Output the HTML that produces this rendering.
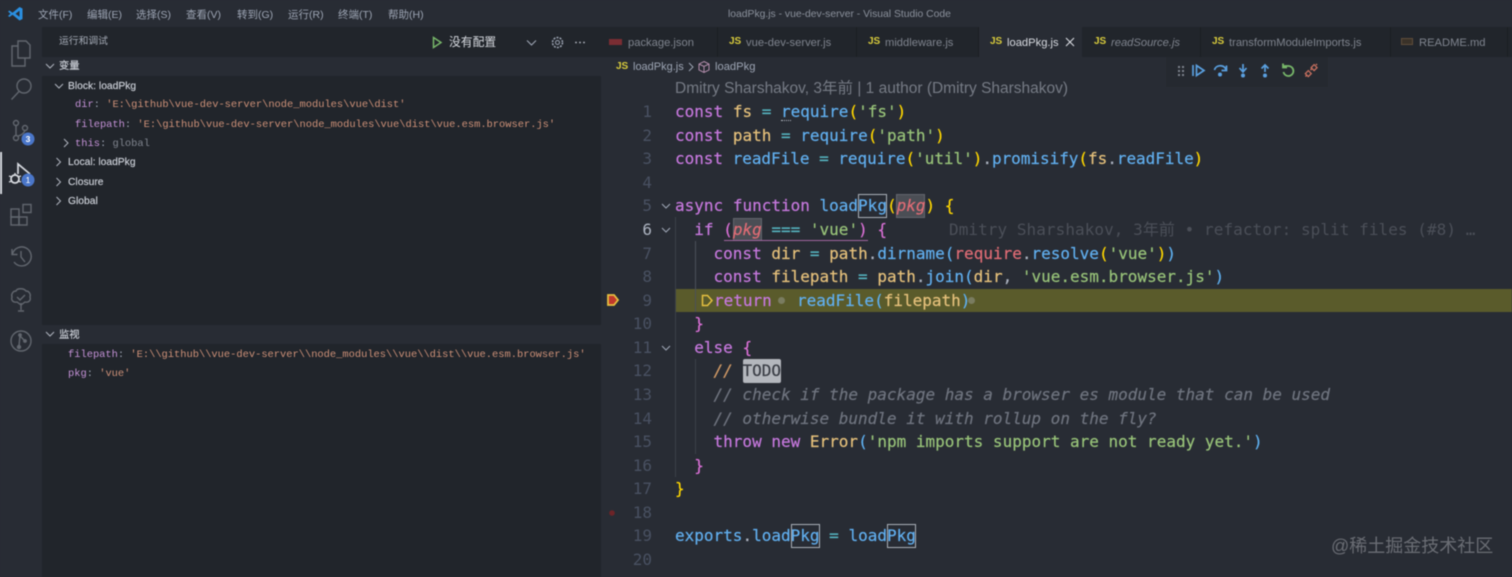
<!DOCTYPE html>
<html><head><meta charset="utf-8"><style>
html,body{margin:0;padding:0;background:#282c34}
#r{position:relative;width:1512px;height:577px;overflow:hidden;background:#282c34;font-family:"Liberation Sans","Noto Sans CJK SC",sans-serif;color:#abb2bf;filter:blur(.45px)}
.a{position:absolute;white-space:pre}
.m{position:absolute;top:6.500px;font-size:10.500px;line-height:16px;color:#9da5b4;white-space:pre}
.tab{position:absolute;top:27px;height:30px;background:#21252b;border-right:1px solid #1b1e23}
.tab b{position:absolute;left:11px;top:8px;font:bold 10px/14px "Liberation Sans",sans-serif;color:#d9cc3c}
.tab span{position:absolute;top:8px;left:28px;font-size:11.200px;line-height:16px;color:#7f848e;white-space:pre}
.c{position:absolute;left:0;height:24px;line-height:24px;font-family:"DejaVu Sans Mono",monospace;font-size:16px;white-space:pre;color:#abb2bf;-webkit-text-stroke:.2px}
.n{position:absolute;left:612px;width:40px;text-align:right;height:24px;line-height:24px;font-family:"DejaVu Sans Mono",monospace;font-size:16px;color:#495162}
.v{position:absolute;font-family:"Liberation Mono",monospace;font-size:10.400px;line-height:14px;white-space:pre;color:#ce9178}
.s{position:absolute;font-size:10.300px;line-height:14px;color:#cdd1d9;white-space:pre;-webkit-text-stroke:.15px}
.k{color:#c678dd}.b{color:#61afef}.g{color:#98c379}.y{color:#e5c07b}.t{color:#56b6c2}.r{color:#e06c75}.G{color:#ffd700}.P{color:#da70d6}.B{color:#5fb0f0}.p{color:#c391d6}.o{color:#d19a66}
.i{font-style:italic;color:#6f747f}
.hl{position:absolute;box-sizing:border-box;height:24px;border:1px solid #aab0b8}
</style></head><body><div id="r">

<!-- activity bar / sidebar -->
<div class="a" style="left:42px;top:27px;width:559px;height:550px;background:#21252b"></div>
<div class="a" style="left:42px;top:57px;width:559px;height:19px;background:#282c34"></div>
<div class="a" style="left:42px;top:325px;width:559px;height:19px;background:#282c34"></div>
<div class="a" style="left:0;top:152px;width:2px;height:42px;background:#d7dae0"></div>

<svg class="a" style="left:0;top:0" width="42" height="360" fill="none" stroke="#62676f" stroke-width="1.400">
<path fill-rule="evenodd" d="M19.500 7L12.500 12.800 9.500 10.500 8 11.500 10.500 13.700 8 16 9.500 17 12.500 14.700 19.500 20.500 22.500 19V8.500zM19.500 10.800L15.500 13.700 19.500 16.700z" fill="#2a8fe0" stroke="none"/>
<path d="M18 41h8l4 4v13h-12zM18 46h-6v20h13v-8"/>
<circle cx="24" cy="86" r="7"/><path d="M19 91.500l-7.500 8"/>
<circle cx="16" cy="123" r="2.500"/><circle cx="16" cy="138" r="2.500"/><circle cx="25" cy="128" r="2.500"/><path d="M16 125.500v10M18 136c4-1 6-3 7-5.500"/>
<path d="M18 174v-10l12 10" stroke="#d7dae0" stroke-width="1.700"/>
<circle cx="15" cy="179" r="4" stroke="#d7dae0" stroke-width="1.800"/><path d="M9 176l3 1M9 182l3-1M21 176l-3 1M21 182l-3-1M15 173v2" stroke="#d7dae0"/>
<rect x="11" y="209" width="8" height="8"/><rect x="11" y="217" width="8" height="8"/><rect x="19" y="217" width="8" height="8"/><rect x="23" y="204.500" width="8" height="8"/>
<path d="M12.500 254a9.500 9.500 0 1 1 1.500 8M12 249v5.500h5.500M21 251v6l4 5"/>
<path d="M21 310v-7M21 305l-4-3c-4 1-6-2-5-5-1-3 1-6 4-6 1-3 8-3 10 0 3 0 5 3 4 6 1 3-1 6-5 5zM17 297l3 3 5-5M18 311h6"/>
<circle cx="21" cy="341" r="10"/><path d="M20 335l-1 11M20 336l5 5"/><circle cx="19" cy="347" r="1.500" fill="#62676f"/><circle cx="20" cy="335" r="1.200" fill="#62676f"/><circle cx="25" cy="341" r="1.200" fill="#62676f"/>
<circle cx="28" cy="139" r="6.500" fill="#4a76c9" stroke="none"/>
<circle cx="28" cy="180" r="6.500" fill="#4a76c9" stroke="none"/>
<text x="28" y="142" font-family="Liberation Sans" font-size="8.500" font-weight="bold" fill="#fff" stroke="none" text-anchor="middle">3</text>
<text x="28" y="183" font-family="Liberation Sans" font-size="8.500" fill="#fff" stroke="none" text-anchor="middle">1</text>
</svg>

<!-- menu -->
<div class="m" style="left:38px">文件(F)</div>
<div class="m" style="left:87px">编辑(E)</div>
<div class="m" style="left:136px">选择(S)</div>
<div class="m" style="left:186px">查看(V)</div>
<div class="m" style="left:237px">转到(G)</div>
<div class="m" style="left:288px">运行(R)</div>
<div class="m" style="left:338px">终端(T)</div>
<div class="m" style="left:388px">帮助(H)</div>
<div class="m" style="left:728px;font-size:10.350px;color:#8b919c">loadPkg.js - vue-dev-server - Visual Studio Code</div>

<!-- sidebar content -->
<div class="a" style="left:59px;top:35px;font-size:9.800px;line-height:14px;color:#a2a8b3">运行和调试</div>
<svg class="a" style="left:430px;top:35px" width="170" height="15" fill="none">
<path d="M3.500 2.500l7.500 5-7.500 5z" stroke="#78b86a" stroke-width="1.500"/>
<path d="M97 5.500l4.500 4.500 4.500-4.500" stroke="#9da5b4" stroke-width="1.100"/>
<circle cx="127.500" cy="7.500" r="2" stroke="#9da5b4"/><circle cx="127.500" cy="7.500" r="5" stroke="#9da5b4" stroke-width="1.500" stroke-dasharray="2 1.200"/>
<circle cx="146" cy="7.500" r=".9" fill="#b5bac4"/><circle cx="150" cy="7.500" r=".9" fill="#b5bac4"/><circle cx="154" cy="7.500" r=".9" fill="#b5bac4"/>
</svg>
<div class="a" style="left:449px;top:34px;font-size:11.800px;line-height:16px;color:#d7dae0">没有配置</div>

<svg class="a" style="left:42px;top:57px" width="30" height="300" fill="none" stroke="#b0b5bf" stroke-width="1">
<path d="M4 7l4 4 4-4"/><path d="M13 27l4 4 4-4"/><path d="M22 82l4 4-4 4"/><path d="M14.500 101l4 4-4 4"/><path d="M14.500 121l4 4-4 4"/><path d="M14.500 140l4 4-4 4"/><path d="M4 275l4 4 4-4"/>
</svg>
<div class="s" style="left:59px;top:60px">变量</div>
<div class="s" style="left:68px;top:80px">Block: loadPkg</div>
<div class="v" style="left:75px;top:98px"><span class="p">dir</span><span style="color:#9da5b4">: </span>'E:\github\vue-dev-server\node_modules\vue\dist'</div>
<div class="v" style="left:75px;top:118px"><span class="p">filepath</span><span style="color:#9da5b4">: </span>'E:\github\vue-dev-server\node_modules\vue\dist\vue.esm.browser.js'</div>
<div class="v" style="left:75px;top:137px"><span class="p">this</span><span style="color:#9da5b4">: </span><span style="color:#7f848e">global</span></div>
<div class="s" style="left:68px;top:156px">Local: loadPkg</div>
<div class="s" style="left:68px;top:176px">Closure</div>
<div class="s" style="left:68px;top:195px">Global</div>
<div class="s" style="left:59px;top:329px">监视</div>
<div class="v" style="left:68px;top:348px"><span class="p">filepath</span><span style="color:#9da5b4">: </span>'E:\\github\\vue-dev-server\\node_modules\\vue\\dist\\vue.esm.browser.js'</div>
<div class="v" style="left:68px;top:367px"><span class="p">pkg</span><span style="color:#9da5b4">: </span>'vue'</div>

<!-- tabs -->
<div class="a" style="left:601px;top:27px;width:911px;height:30px;background:#21252b"></div>
<div class="tab" style="left:601px;width:116px"><i class="a" style="left:8px;top:12px;width:13px;height:6px;background:#7a2d33"></i><span style="left:27px">package.json</span></div>
<div class="tab" style="left:718px;width:138px"><b>JS</b><span>vue-dev-server.js</span></div>
<div class="tab" style="left:857px;width:121px"><b>JS</b><span>middleware.js</span></div>
<div class="tab" style="left:979px;width:103px;background:#282c34;border:0"><b>JS</b><span style="color:#d7dae0">loadPkg.js</span><svg class="a" style="left:85px;top:9px" width="12" height="12" stroke="#d7dae0" stroke-width="1.100"><path d="M2 2l8 8M10 2l-8 8"/></svg></div>
<div class="tab" style="left:1083px;width:117px"><b>JS</b><span style="font-style:italic">readSource.js</span></div>
<div class="tab" style="left:1201px;width:189px"><b>JS</b><span>transformModuleImports.js</span></div>
<div class="tab" style="left:1391px;width:116px"><i class="a" style="left:10px;top:11px;width:12px;height:7px;border:1px solid #5e4d3a;box-sizing:border-box;background:#3a3229"></i><span>README.md</span></div>

<!-- breadcrumbs -->
<div class="a" style="left:616px;top:60px;font:bold 10px/14px 'Liberation Sans',sans-serif;color:#d9cc3c">JS</div>
<div class="a" style="left:633px;top:59px;font-size:11px;line-height:16px;color:#9da5b4">loadPkg.js</div>
<svg class="a" style="left:687px;top:60px" width="26" height="14" fill="none"><path d="M2 3l4 4-4 4" stroke="#9da5b4"/><path d="M17 1.500l5 2.500v6l-5 2.500-5-2.500v-6zM12 4l5 2.500 5-2.500M17 6.500v6" stroke="#b48ead"/></svg>
<div class="a" style="left:715px;top:59px;font-size:11.200px;line-height:16px;color:#9da5b4">loadPkg</div>

<!-- codelens -->
<div class="a" style="left:675px;top:80px;font-size:15.500px;line-height:18px;color:#767b85">Dmitry Sharshakov, 3年前 | 1 author (Dmitry Sharshakov)</div>

<!-- debug toolbar -->
<div class="a" style="left:1166px;top:57px;width:162px;height:30px;background:#252930"></div>
<svg class="a" style="left:1166px;top:57px" width="162" height="30" fill="none" stroke-width="1.700">
<g fill="#7f848e"><rect x="12" y="9" width="2" height="2"/><rect x="16" y="9" width="2" height="2"/><rect x="12" y="13" width="2" height="2"/><rect x="16" y="13" width="2" height="2"/><rect x="12" y="17" width="2" height="2"/><rect x="16" y="17" width="2" height="2"/></g>
<path d="M27 8v11" stroke="#5aa0e0"/><path d="M30.500 8.500l7.500 5-7.500 5z" stroke="#5aa0e0"/>
<path d="M48.500 13c1-5 9-6 11.500-.5M60.500 8.500v5h-5" stroke="#5aa0e0"/><circle cx="54" cy="17.500" r="2" fill="#5aa0e0" stroke="none"/>
<path d="M77 7v8M73.500 11l3.500 4 3.500-4" stroke="#5aa0e0"/><circle cx="77" cy="18.500" r="2" fill="#5aa0e0" stroke="none"/>
<path d="M99 15V8M95.500 11.500L99 8l3.500 3.500" stroke="#5aa0e0"/><circle cx="99" cy="18.500" r="2" fill="#5aa0e0" stroke="none"/>
<path d="M117 9h5.500a5 5 0 1 1-5 6M117 6.500v4h4" stroke="#78b86a" stroke-width="1.800"/>
<path d="M139.500 19.500l1-1M144.500 13l1.500-1.500M150 8l1-1" stroke="#c8705f" stroke-width="1.500"/><rect x="140.200" y="14.500" width="4.200" height="4.200" transform="rotate(45 142.300 16.600)" stroke="#c8705f" stroke-width="1.300"/><rect x="146" y="8.500" width="4.200" height="4.200" transform="rotate(45 148.100 10.600)" stroke="#c8705f" stroke-width="1.300"/>
</svg>

<!-- indent guides and line 9 -->
<div class="a" style="left:675px;top:289px;width:837px;height:23px;background:#5a5b2b"></div>
<div class="a" style="left:675px;top:217px;width:1px;height:260px;background:#3b4048"></div>
<div class="a" style="left:695px;top:241px;width:1px;height:71px;background:#4b5059"></div>
<div class="a" style="left:695px;top:359px;width:1px;height:95px;background:#3b4048"></div>

<!-- highlights -->
<div class="hl" style="left:858px;top:194px;width:29px"></div>
<div class="hl" style="left:896px;top:194px;width:29px;background:#4b4e55;border-color:#62656c"></div>
<div class="hl" style="left:733px;top:218px;width:29px;height:23px;background:#4b4e55;border-color:#62656c"></div>
<div class="a" style="left:724px;top:240px;width:144px;height:1px;background:#a0659f"></div>
<div class="a" style="left:743px;top:359px;width:38px;height:24px;background:#b4b7bd;border-radius:2px"></div>
<div class="hl" style="left:791px;top:524px;width:29px"></div>
<div class="hl" style="left:887px;top:524px;width:29px"></div>

<!-- line numbers -->
<div class="n" style="top:100px">1</div><div class="n" style="top:123.600px">2</div><div class="n" style="top:147.200px">3</div><div class="n" style="top:170.700px">4</div><div class="n" style="top:194.300px">5</div><div class="n" style="top:217.900px;color:#abb2bf">6</div><div class="n" style="top:241.500px">7</div><div class="n" style="top:265.100px">8</div><div class="n" style="top:288.600px">9</div><div class="n" style="top:312.200px">10</div><div class="n" style="top:335.800px">11</div><div class="n" style="top:359.400px">12</div><div class="n" style="top:383px">13</div><div class="n" style="top:406.500px">14</div><div class="n" style="top:430.100px">15</div><div class="n" style="top:453.700px">16</div><div class="n" style="top:477.300px">17</div><div class="n" style="top:500.900px">18</div><div class="n" style="top:524.400px">19</div><div class="n" style="top:548px">20</div>

<svg class="a" style="left:600px;top:190px" width="80" height="335" fill="none">
<path d="M62 14l4 4 4-4M62 38l4 4 4-4M62 156l4 4 4-4" stroke="#9da5b4" stroke-width="1.100"/>
<path d="M8 105h6l4 5-4 5H8z" fill="#c0392b" stroke="#e5c040" stroke-width="1.800"/>
<circle cx="12" cy="323" r="2.800" fill="#6d2428"/>
</svg>

<!-- code -->
<div class="c" style="left:675px;top:100px"><span class="k">const</span> <span class="y">fs</span> <span class="t">=</span> <span class="b">require</span><span class="G">(</span><span class="g">'fs'</span><span class="G">)</span></div>
<div class="a" style="left:781px;top:120px;width:10px;height:2px;border-top:1px dotted #b5bac4"></div>
<div class="c" style="left:675px;top:123.600px"><span class="k">const</span> <span class="y">path</span> <span class="t">=</span> <span class="b">require</span><span class="G">(</span><span class="g">'path'</span><span class="G">)</span></div>
<div class="c" style="left:675px;top:147.200px;letter-spacing:-.03px"><span class="k">const</span> <span class="b">readFile</span> <span class="t">=</span> <span class="b">require</span><span class="G">(</span><span class="g">'util'</span><span class="G">)</span><span style="color:#abb2bf">.</span><span class="b">promisify</span><span class="G">(</span><span class="y">fs</span><span style="color:#abb2bf">.</span><span class="b">readFile</span><span class="G">)</span></div>
<div class="c" style="left:675px;top:194.300px"><span class="k">async</span> <span class="k">function</span> <span class="b">loadPkg</span><span class="G">(</span><span class="r" style="font-style:italic">pkg</span><span class="G">)</span> <span class="G">{</span></div>
<div class="c" style="left:675px;top:217.900px">  <span class="k">if</span> <span class="P">(</span><span class="r" style="font-style:italic">pkg</span> <span class="t">===</span> <span class="g">'vue'</span><span class="P">)</span> <span class="P">{</span></div>
<div class="c" style="left:949px;top:217.900px;color:#4b4f58;-webkit-text-stroke:0;letter-spacing:.06px">Dmitry Sharshakov, 3年前 • refactor: split files (#8) …</div>
<div class="c" style="left:675px;top:241.500px">    <span class="k">const</span> <span class="y">dir</span> <span class="t">=</span> <span class="y">path</span>.<span class="b">dirname</span><span class="B">(</span><span class="r">require</span>.<span class="b">resolve</span><span class="G">(</span><span class="g">'vue'</span><span class="G">)</span><span class="B">)</span></div>
<div class="c" style="left:675px;top:265.100px">    <span class="k">const</span> <span class="y">filepath</span> <span class="t">=</span> <span class="y">path</span>.<span class="b">join</span><span class="B">(</span><span class="y">dir</span>, <span class="g">'vue.esm.browser.js'</span><span class="B">)</span></div>
<svg class="a" style="left:701px;top:294px" width="13" height="13" fill="none"><path d="M1.500 1.500h5l4.500 5-4.500 5h-5z" stroke="#e5c040" stroke-width="1.500"/></svg>
<div class="c" style="left:714px;top:288.600px"><span class="k">return</span></div>
<div class="a" style="left:778px;top:297px;width:7px;height:7px;border-radius:50%;background:#7a7c60"></div>
<div class="c" style="left:797px;top:288.600px"><span class="b">readFile</span><span class="B">(</span><span class="y">filepath</span><span class="B">)</span></div>
<div class="a" style="left:968px;top:297px;width:7px;height:7px;border-radius:50%;background:#7a7c60"></div>
<div class="c" style="left:675px;top:312.200px">  <span class="P">}</span></div>
<div class="c" style="left:675px;top:335.800px">  <span class="k">else</span> <span class="P">{</span></div>
<div class="c" style="left:675px;top:359.400px">    <span class="o" style="font-style:italic">//</span> <span style="color:#3a3d45">TODO</span></div>
<div class="c i" style="left:675px;top:383px">    // check if the package has a browser es module that can be used</div>
<div class="c i" style="left:675px;top:406.500px">    // otherwise bundle it with rollup on the fly?</div>
<div class="c" style="left:675px;top:430.100px">    <span class="k">throw</span> <span class="k">new</span> <span class="y">Error</span><span class="B">(</span><span class="g">'npm imports support are not ready yet.'</span><span class="B">)</span></div>
<div class="c" style="left:675px;top:453.700px">  <span class="P">}</span></div>
<div class="c" style="left:675px;top:477.300px"><span class="G">}</span></div>
<div class="c" style="left:675px;top:524.400px"><span class="b">exports</span>.<span class="b">loadPkg</span> <span class="t">=</span> <span class="b">loadPkg</span></div>

<!-- watermark -->
<div class="a" style="left:1331px;top:535px;font-size:18px;line-height:22px;color:#6a6d74">@稀土掘金技术社区</div>
</div></body></html>
